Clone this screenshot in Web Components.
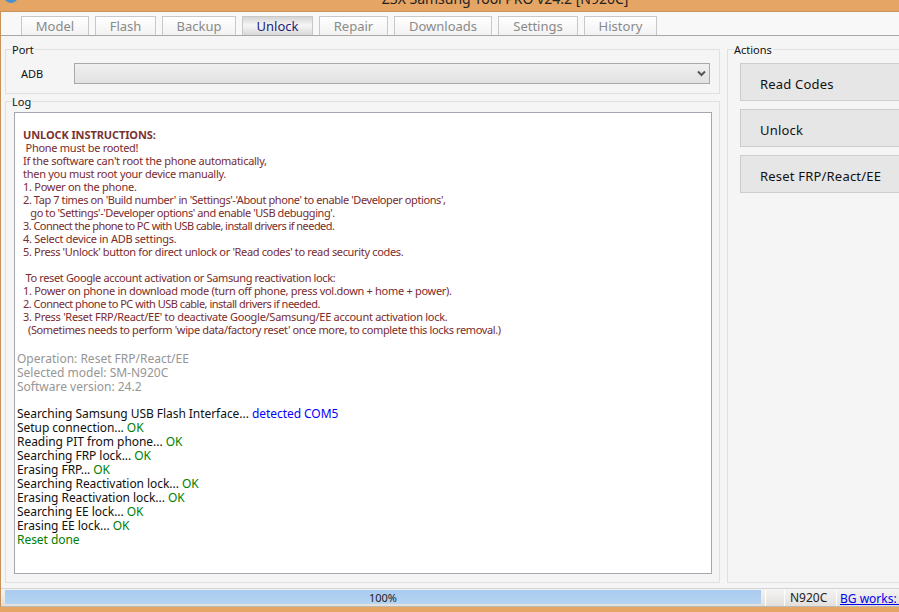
<!DOCTYPE html>
<html>
<head>
<meta charset="utf-8">
<title>Z3X Samsung Tool PRO</title>
<style>
    html, body { margin: 0; padding: 0; height: 100%; overflow: hidden; background: #e5a564; }
    body { font-family: "Noto Sans", sans-serif; }
</style>
</head>
<body>
<tool-window>
    <nav slot="tabs">
        <tool-tab w="68">Model</tool-tab>
        <tool-tab w="61">Flash</tool-tab>
        <tool-tab w="74">Backup</tool-tab>
        <tool-tab w="71" active>Unlock</tool-tab>
        <tool-tab w="69">Repair</tool-tab>
        <tool-tab w="98">Downloads</tool-tab>
        <tool-tab w="80">Settings</tool-tab>
        <tool-tab w="73">History</tool-tab>
    </nav>
    <port-box slot="port" label="ADB"></port-box>
    <log-view slot="log">
        <div class="block instr">
            <b>UNLOCK INSTRUCTIONS:</b>
            <div>&nbsp;Phone must be rooted!</div>
            <div>If the software can't root the phone automatically,</div>
            <div>then you must root your device manually.</div>
            <div>1. Power on the phone.</div>
            <div style="letter-spacing:-.41px">2. Tap 7 times on 'Build number' in 'Settings'-'About phone' to enable 'Developer options',</div>
            <div style="letter-spacing:-.42px">&nbsp;&nbsp;&nbsp;go to 'Settings'-'Developer options' and enable 'USB debugging'.</div>
            <div style="letter-spacing:-.55px">3. Connect the phone to PC with USB cable, install drivers if needed.</div>
            <div>4. Select device in ADB settings.</div>
            <div style="letter-spacing:-.34px">5. Press 'Unlock' button for direct unlock or 'Read codes' to read security codes.</div>
            <div>&nbsp;</div>
            <div style="letter-spacing:-.36px">&nbsp;To reset Google account activation or Samsung reactivation lock:</div>
            <div style="letter-spacing:-.3px">1. Power on phone in download mode (turn off phone, press vol.down + home + power).</div>
            <div style="letter-spacing:-.5px">2. Connect phone to PC with USB cable, install drivers if needed.</div>
            <div>3. Press 'Reset FRP/React/EE' to deactivate Google/Samsung/EE account activation lock.</div>
            <div style="letter-spacing:-.37px">&nbsp;&nbsp;(Sometimes needs to perform 'wipe data/factory reset' once more, to complete this locks removal.)</div>
        </div>
        <div class="block info">
            <div>Operation: Reset FRP/React/EE</div>
            <div>Selected model: SM-N920C</div>
            <div>Software version: 24.2</div>
        </div>
        <div class="block steps">
            <div>Searching Samsung USB Flash Interface... <span class="blue">detected COM5</span></div>
            <div>Setup connection... <span class="ok">OK</span></div>
            <div>Reading PIT from phone... <span class="ok">OK</span></div>
            <div>Searching FRP lock... <span class="ok">OK</span></div>
            <div>Erasing FRP... <span class="ok">OK</span></div>
            <div>Searching Reactivation lock... <span class="ok">OK</span></div>
            <div>Erasing Reactivation lock... <span class="ok">OK</span></div>
            <div>Searching EE lock... <span class="ok">OK</span></div>
            <div>Erasing EE lock... <span class="ok">OK</span></div>
            <div class="ok">Reset done</div>
        </div>
    </log-view>
    <action-btn slot="actions" h="38">Read Codes</action-btn>
    <action-btn slot="actions" h="38">Unlock</action-btn>
    <action-btn slot="actions" h="38">Reset FRP/React/EE</action-btn>
</tool-window>

<script>
const win = document.createElement('template');
win.innerHTML = `
    <style>
        :host{
            display: flex;
            flex-direction: column;
            width: 899px;
            height: 612px;
            overflow: hidden;
        }
        .title{
            height: 12px;
            flex: none;
            position: relative;
            overflow: hidden;
            background: #e5a564;
            border-bottom: 1px solid #c9925a;
            display: flex;
            justify-content: center;
            align-items: flex-end;
            padding: 0 0 3px 111px;
            box-sizing: border-box;
            font: 14px "Noto Sans", sans-serif;
            line-height: 18px;
            color: #222;
            white-space: nowrap;
        }
        .title svg{
            position: absolute;
            left: 3px;
            top: -15px;
        }
        .body{
            flex: none;
            height: 595px;
            margin: 0 0 5px 0;
            background: #f5f5f5;
            border-left: 1px solid #c9925a;
            display: flex;
            flex-direction: column;
            box-sizing: border-box;
        }
        .tabs{
            height: 24px;
            flex: none;
            background: #f8f8f8;
            border-bottom: 1px solid #a8a8a8;
            box-sizing: border-box;
        }
        ::slotted(nav){
            display: flex;
            gap: 6px;
            padding: 4px 0 0 20px;
        }
        .main{
            flex: 1;
            display: grid;
            grid-template-columns: 715px 1fr;
            grid-template-rows: 45px 482px;
            gap: 7px;
            padding: 13px 0 0 4px;
            box-sizing: border-box;
            min-height: 0;
        }
        .actions{
            grid-column: 2;
            grid-row: 1 / 3;
        }
        .stack{
            display: flex;
            flex-direction: column;
            gap: 8px;
            padding: 13px 0 0 12px;
        }
        .status{
            flex: none;
            height: 19px;
        }
    </style>
    <div class="title">
        <svg width="16" height="22" viewBox="0 0 16 22"><circle cx="8" cy="11" r="7" fill="#4a8fd0"/><circle cx="8" cy="11" r="3" fill="#dbe9f6"/></svg>
        Z3X Samsung Tool PRO v24.2 [N920C]
    </div>
    <div class="body">
        <div class="tabs"><slot name="tabs"></slot></div>
        <div class="main">
            <group-box label="Port"><slot name="port"></slot></group-box>
            <group-box class="actions" label="Actions"><div class="stack"><slot name="actions"></slot></div></group-box>
            <group-box label="Log"><slot name="log"></slot></group-box>
        </div>
        <status-bar class="status" percent="100%" model="N920C" link="BG works: 0"></status-bar>
    </div>
`;
class ToolWindow extends HTMLElement{
    constructor() {
        super();
        this.attachShadow({ mode: 'open' });
        this.shadowRoot.appendChild(win.content.cloneNode(true));
    }
}

const tab = document.createElement('template');
tab.innerHTML = `
    <style>
        :host{
            display: block;
            height: 19px;
            box-sizing: border-box;
            border: 1px solid #c8c8c8;
            border-bottom: none;
            background: linear-gradient(#ffffff, #f2f2f2);
            color: #8a8a8a;
            font: 13px/18px "Noto Sans", sans-serif;
            text-align: center;
        }
        :host([active]){
            background: linear-gradient(#d4d4d4, #f6f6f6 45%, #d8d8d8);
            color: #1c1c78;
        }
    </style>
    <slot></slot>
`;
class ToolTab extends HTMLElement{
    constructor() {
        super();
        this.attachShadow({ mode: 'open' });
        this.shadowRoot.appendChild(tab.content.cloneNode(true));
    }
    connectedCallback() {
        this.style.width = this.getAttribute('w') + 'px';
    }
}

const group = document.createElement('template');
group.innerHTML = `
    <style>
        :host{
            display: block;
            position: relative;
            box-sizing: border-box;
            border: 1px solid #e0e0e0;
        }
        .legend{
            position: absolute;
            left: 6px;
            top: -7px;
            padding: 0 1px 0 0;
            background: #f5f5f5;
            font: 11px/13px "Noto Sans", sans-serif;
            color: #111;
        }
    </style>
    <div class="legend"></div>
    <slot></slot>
`;
class GroupBox extends HTMLElement{
    constructor() {
        super();
        this.attachShadow({ mode: 'open' });
        this.shadowRoot.appendChild(group.content.cloneNode(true));
    }
    connectedCallback() {
        this.shadowRoot.querySelector('.legend').textContent = this.getAttribute('label');
    }
}

const port = document.createElement('template');
port.innerHTML = `
    <style>
        :host{
            display: flex;
            align-items: center;
            height: 100%;
            padding: 3px 9px 0 15px;
            box-sizing: border-box;
            font: 11px "Noto Sans", sans-serif;
            color: #111;
        }
        .label{ width: 53px; flex: none; }
        .select{
            flex: 1;
            height: 21px;
            box-sizing: border-box;
            border: 1px solid #a9a9a9;
            background: linear-gradient(#f0f0f0, #e1e1e1);
            display: flex;
            align-items: center;
            justify-content: flex-end;
            padding-right: 3px;
        }
    </style>
    <div class="label"></div>
    <div class="select">
        <svg width="9" height="7" viewBox="0 0 9 7"><path d="M1 1.5 L4.5 5 L8 1.5" fill="none" stroke="#555" stroke-width="2"/></svg>
    </div>
`;
class PortBox extends HTMLElement{
    constructor() {
        super();
        this.attachShadow({ mode: 'open' });
        this.shadowRoot.appendChild(port.content.cloneNode(true));
    }
    connectedCallback() {
        this.shadowRoot.querySelector('.label').textContent = this.getAttribute('label');
    }
}

const log = document.createElement('template');
log.innerHTML = `
    <style>
        :host{
            display: block;
            box-sizing: border-box;
            width: 698px;
            height: 462px;
            margin: 10px 0 0 8px;
            border: 1px solid #a6a6b0;
            background: #fff;
            overflow: hidden;
            font: 11px "Noto Sans", sans-serif;
        }
        ::slotted(.instr){
            margin: 15px 0 0 8px;
            line-height: 13px;
            letter-spacing: -0.28px;
            color: #7a2c2c;
        }
        ::slotted(.info){
            margin: 16px 0 0 2px;
            line-height: 14px;
            font-size: 12px;
            color: #969696;
        }
        ::slotted(.steps){
            margin: 13px 0 0 2px;
            line-height: 14px;
            font-size: 12px;
            letter-spacing: -0.05px;
            color: #111;
        }
    </style>
    <slot></slot>
`;
class LogView extends HTMLElement{
    constructor() {
        super();
        this.attachShadow({ mode: 'open' });
        this.shadowRoot.appendChild(log.content.cloneNode(true));
    }
}

const btn = document.createElement('template');
btn.innerHTML = `
    <style>
        :host{
            display: flex;
            align-items: center;
            box-sizing: border-box;
            width: 175px;
            padding: 3px 0 0 19px;
            background: #e6e6e6;
            border: 1px solid #cdcdcd;
            font: 13px "Noto Sans", sans-serif;
            letter-spacing: 0.2px;
            color: #111;
            white-space: nowrap;
        }
    </style>
    <slot></slot>
`;
class ActionBtn extends HTMLElement{
    constructor() {
        super();
        this.attachShadow({ mode: 'open' });
        this.shadowRoot.appendChild(btn.content.cloneNode(true));
    }
    connectedCallback() {
        this.style.height = this.getAttribute('h') + 'px';
    }
}

const status = document.createElement('template');
status.innerHTML = `
    <style>
        :host{
            display: flex;
            align-items: stretch;
            box-sizing: border-box;
            border-top: 1px solid #d4d4d4;
            border-bottom: 1px solid #bdbab5;
            background: linear-gradient(#f4f4f4, #e2e0dc);
            font: 11px "Noto Sans", sans-serif;
            color: #222;
            white-space: nowrap;
        }
        .bar{
            flex: none;
            width: 756px;
            margin: 1px 0 0 4px;
            height: 14px;
            text-align: center;
            line-height: 15px;
            background: linear-gradient(#a9cbef, #b6d4f2);
        }
        .gap{ flex: none; width: 20px; margin-left: 4px; box-sizing: border-box; border-left: 1px solid #fff; border-right: 1px solid #fff; }
        .model{ flex: none; width: 52px; padding-left: 5px; box-sizing: border-box; font-size: 12px; line-height: 17px; border-right: 1px solid #fff; }
        a{ margin-left: 3px; color: #0000ee; font-size: 12px; line-height: 19px; text-decoration: underline; }
    </style>
    <div class="bar"></div>
    <div class="gap"></div>
    <div class="model"></div>
    <a href="#"></a>
`;
class StatusBar extends HTMLElement{
    constructor() {
        super();
        this.attachShadow({ mode: 'open' });
        this.shadowRoot.appendChild(status.content.cloneNode(true));
    }
    connectedCallback() {
        this.shadowRoot.querySelector('.bar').textContent = this.getAttribute('percent');
        this.shadowRoot.querySelector('.model').textContent = this.getAttribute('model');
        this.shadowRoot.querySelector('a').textContent = this.getAttribute('link');
    }
}

// light dom colours for the log lines
const extra = document.createElement('style');
extra.textContent = `
    log-view b{ color: #7a3333; letter-spacing: -0.1px; }
    log-view .ok{ color: #008000; }
    log-view .blue{ color: #0000ff; }
`;
document.head.appendChild(extra);

window.customElements.define('group-box', GroupBox);
window.customElements.define('tool-tab', ToolTab);
window.customElements.define('port-box', PortBox);
window.customElements.define('log-view', LogView);
window.customElements.define('action-btn', ActionBtn);
window.customElements.define('status-bar', StatusBar);
window.customElements.define('tool-window', ToolWindow);
</script>
</body>
</html>
